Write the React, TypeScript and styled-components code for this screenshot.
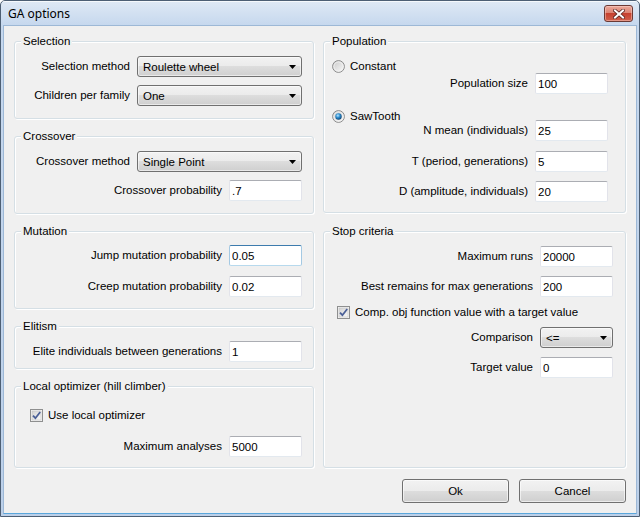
import React from 'react'
import styled, { createGlobalStyle } from 'styled-components'

const GlobalStyle = createGlobalStyle`
  html, body {
    margin: 0;
    padding: 0;
    background: #ffffff;
  }
  body {
    font-family: 'Liberation Sans', Arial, sans-serif;
    font-size: 11.5px;
    color: #000;
  }
`

const Window = styled.div`
  width: 640px;
  height: 517px;
  box-sizing: border-box;
  border: 1px solid #4d5f74;
  border-radius: 5px 5px 0 0;
  background: linear-gradient(#dfe9f5 0px, #c6d8ee 24px, #bcd0e9 100%);
  display: flex;
  flex-direction: column;
  overflow: hidden;
`

const TitleBar = styled.div`
  height: 24px;
  flex: none;
  display: flex;
  justify-content: space-between;
  padding: 0 6px 0 7px;
  box-shadow: inset 0 1px 0 rgba(255, 255, 255, 0.7);
`

const Title = styled.span`
  align-self: center;
  margin-top: 1px;
  font-family: 'Noto Sans', 'Liberation Sans', sans-serif;
  font-size: 12px;
  color: #000;
`

const CloseButton = styled.div`
  align-self: flex-start;
  margin-top: 4px;
  width: 29px;
  height: 17px;
  box-sizing: border-box;
  border: 1px solid #6b3a35;
  border-radius: 3px;
  background: linear-gradient(#eba99c 0%, #dc8473 45%, #c6412f 50%, #d0604b 100%);
  box-shadow: inset 0 0 0 1px rgba(255, 220, 210, 0.45);
  display: flex;
  align-items: center;
  justify-content: center;
`

const Client = styled.div`
  flex: 1;
  margin: 0 2px 2px;
  border: 1px solid #9db8d6;
  border-bottom-color: #5aa7dc;
  background: #f0f0f0;
  display: flex;
  flex-direction: column;
  padding: 15px 10px 0;
`

const Columns = styled.div`
  display: grid;
  grid-template-columns: 300px 303px;
  column-gap: 9px;
`

const Column = styled.div<{ $gap: number }>`
  display: flex;
  flex-direction: column;
  gap: ${(p) => p.$gap}px;
`

const Group = styled.div<{ $h: number }>`
  height: ${(p) => p.$h}px;
  box-sizing: border-box;
  border: 1px solid #d5dfe5;
  border-radius: 3px;
  box-shadow: inset 1px 1px 0 #ffffff, 1px 1px 0 #ffffff;
  display: flex;
  flex-direction: column;
`

const Legend = styled.span`
  align-self: flex-start;
  margin: -7px 0 0 6px;
  padding: 0 2px;
  line-height: 13px;
  background: #f0f0f0;
  white-space: nowrap;
`

const GroupBody = styled.div<{ $pl: number; $pr: number }>`
  display: flex;
  flex-direction: column;
  padding: 0 ${(p) => p.$pr}px 0 ${(p) => p.$pl}px;
`

const Row = styled.div<{ $mt: number }>`
  display: flex;
  align-items: center;
  justify-content: flex-end;
  gap: 7px;
  height: 21px;
  margin-top: ${(p) => p.$mt}px;
`

const OptionRow = styled.div<{ $mt: number }>`
  display: flex;
  align-items: center;
  gap: 5px;
  height: 13px;
  margin-top: ${(p) => p.$mt}px;
`

const Label = styled.span`
  white-space: nowrap;
  line-height: 13px;
`

const TextBox = styled.input<{ $focus?: boolean }>`
  width: 73px;
  height: 21px;
  box-sizing: border-box;
  margin: 0;
  padding: 0 2px;
  border: 1px solid;
  border-radius: 2px;
  border-color: ${(p) =>
    p.$focus ? '#3d7bad #a4c9e3 #b7d9ed #a4c9e3' : '#abadb3 #e2e3ea #e3e9ef #e2e3ea'};
  background: #ffffff;
  font: inherit;
  color: #000;
  outline: none;
`

const Combo = styled.div<{ $w: number }>`
  width: ${(p) => p.$w}px;
  height: 21px;
  box-sizing: border-box;
  border: 1px solid #707070;
  border-radius: 3px;
  background: linear-gradient(#f2f2f2 0%, #ebebeb 50%, #dddddd 50%, #cfcfcf 100%);
  box-shadow: inset 0 0 0 1px rgba(255, 255, 255, 0.55);
  display: flex;
  align-items: center;
  justify-content: space-between;
  padding: 0 5px 0 5px;
`

const Footer = styled.div`
  display: flex;
  justify-content: flex-end;
  gap: 10px;
  margin-top: 11px;
`

const Button = styled.button`
  width: 107px;
  height: 24px;
  box-sizing: border-box;
  margin: 0;
  border: 1px solid #707070;
  border-radius: 3px;
  background: linear-gradient(#f2f2f2 0%, #ebebeb 50%, #dddddd 50%, #cfcfcf 100%);
  box-shadow: inset 0 0 0 1px rgba(255, 255, 255, 0.6);
  font: inherit;
  color: #000;
  padding: 0;
`

function CloseGlyph() {
  return (
    <svg width="12" height="10" viewBox="0 0 12 10">
      <path d="M2 1.5 L10 8.5 M10 1.5 L2 8.5" stroke="#5a2620" strokeWidth="3.6" strokeLinecap="square" />
      <path d="M2 1.5 L10 8.5 M10 1.5 L2 8.5" stroke="#ffffff" strokeWidth="2" strokeLinecap="square" />
    </svg>
  )
}

function ArrowGlyph() {
  return (
    <svg width="7" height="4" viewBox="0 0 7 4">
      <polygon points="0,0 7,0 3.5,4" fill="#000" />
    </svg>
  )
}

function Radio({ checked, id }: { checked?: boolean; id: string }) {
  return (
    <svg width="13" height="13" viewBox="0 0 13 13">
      <defs>
        <linearGradient id={`rb-${id}`} x1="0" y1="0" x2="1" y2="1">
          <stop offset="0" stopColor="#c8c8c8" />
          <stop offset="1" stopColor="#fbfbfb" />
        </linearGradient>
        <radialGradient id={`rd-${id}`} cx="0.4" cy="0.35" r="0.7">
          <stop offset="0" stopColor="#b9e6ff" />
          <stop offset="0.45" stopColor="#2f8fd0" />
          <stop offset="1" stopColor="#0b3d6b" />
        </radialGradient>
      </defs>
      <circle cx="6.5" cy="6.5" r="5.9" fill={`url(#rb-${id})`} stroke="#8a8a8a" strokeWidth="1" />
      <circle cx="6.5" cy="6.5" r="4.6" fill="none" stroke="#f4f4f4" strokeWidth="0.8" />
      {checked && <circle cx="6.5" cy="6.5" r="3.2" fill={`url(#rd-${id})`} />}
    </svg>
  )
}

function Check({ id }: { id: string }) {
  return (
    <svg width="13" height="13" viewBox="0 0 13 13">
      <defs>
        <linearGradient id={`cb-${id}`} x1="0" y1="0" x2="1" y2="1">
          <stop offset="0" stopColor="#d2d2d2" />
          <stop offset="1" stopColor="#fafafa" />
        </linearGradient>
      </defs>
      <rect x="0.5" y="0.5" width="12" height="12" fill="#f4f4f4" stroke="#8e8f8f" />
      <rect x="2" y="2" width="9" height="9" fill={`url(#cb-${id})`} stroke="#c2c2c2" strokeWidth="0.6" />
      <path d="M3 6.6 L5.4 9.2 L10.2 3" fill="none" stroke="#4a5f97" strokeWidth="1.8" />
    </svg>
  )
}

function Field({ label, value, mt, focus }: { label: string; value: string; mt: number; focus?: boolean }) {
  return (
    <Row $mt={mt}>
      <Label>{label}</Label>
      <TextBox $focus={focus} readOnly value={value} />
    </Row>
  )
}

function Select({ label, value, mt, width }: { label: string; value: string; mt: number; width: number }) {
  return (
    <Row $mt={mt}>
      <Label>{label}</Label>
      <Combo $w={width}>
        <span>{value}</span>
        <ArrowGlyph />
      </Combo>
    </Row>
  )
}

export default function App() {
  return (
    <>
      <GlobalStyle />
      <Window>
        <TitleBar>
          <Title>GA options</Title>
          <CloseButton>
            <CloseGlyph />
          </CloseButton>
        </TitleBar>
        <Client>
          <Columns>
            <Column $gap={17}>
              <Group $h={78}>
                <Legend>Selection</Legend>
                <GroupBody $pl={15} $pr={11}>
                  <Select label="Selection method" value="Roulette wheel" mt={8} width={165} />
                  <Select label="Children per family" value="One" mt={8} width={165} />
                </GroupBody>
              </Group>
              <Group $h={78}>
                <Legend>Crossover</Legend>
                <GroupBody $pl={15} $pr={11}>
                  <Select label="Crossover method" value="Single Point" mt={8} width={165} />
                  <Field label="Crossover probability" value=".7" mt={8} />
                </GroupBody>
              </Group>
              <Group $h={78}>
                <Legend>Mutation</Legend>
                <GroupBody $pl={15} $pr={11}>
                  <Field label="Jump mutation probability" value="0.05" mt={7} focus />
                  <Field label="Creep mutation probability" value="0.02" mt={10} />
                </GroupBody>
              </Group>
              <Group $h={43}>
                <Legend>Elitism</Legend>
                <GroupBody $pl={15} $pr={11}>
                  <Field label="Elite individuals between generations" value="1" mt={8} />
                </GroupBody>
              </Group>
              <Group $h={82}>
                <Legend>Local optimizer (hill climber)</Legend>
                <GroupBody $pl={15} $pr={11}>
                  <OptionRow $mt={16}>
                    <Check id="local" />
                    <Label>Use local optimizer</Label>
                  </OptionRow>
                  <Field label="Maximum analyses" value="5000" mt={14} />
                </GroupBody>
              </Group>
            </Column>
            <Column $gap={18}>
              <Group $h={172}>
                <Legend>Population</Legend>
                <GroupBody $pl={8} $pr={17}>
                  <OptionRow $mt={12}>
                    <Radio id="constant" />
                    <Label>Constant</Label>
                  </OptionRow>
                  <Field label="Population size" value="100" mt={0} />
                  <OptionRow $mt={16}>
                    <Radio id="saw" checked />
                    <Label>SawTooth</Label>
                  </OptionRow>
                  <Field label="N mean (individuals)" value="25" mt={-3} />
                  <Field label="T (period, generations)" value="5" mt={10} />
                  <Field label="D (amplitude, individuals)" value="20" mt={9} />
                </GroupBody>
              </Group>
              <Group $h={237}>
                <Legend>Stop criteria</Legend>
                <GroupBody $pl={13} $pr={12}>
                  <Field label="Maximum runs" value="20000" mt={8} />
                  <Field label="Best remains for max generations" value="200" mt={9} />
                  <OptionRow $mt={9}>
                    <Check id="comp" />
                    <Label>Comp. obj function value with a target value</Label>
                  </OptionRow>
                  <Select label="Comparison" value="<=" mt={8} width={73} />
                  <Field label="Target value" value="0" mt={9} />
                </GroupBody>
              </Group>
            </Column>
          </Columns>
          <Footer>
            <Button>Ok</Button>
            <Button>Cancel</Button>
          </Footer>
        </Client>
      </Window>
    </>
  )
}
